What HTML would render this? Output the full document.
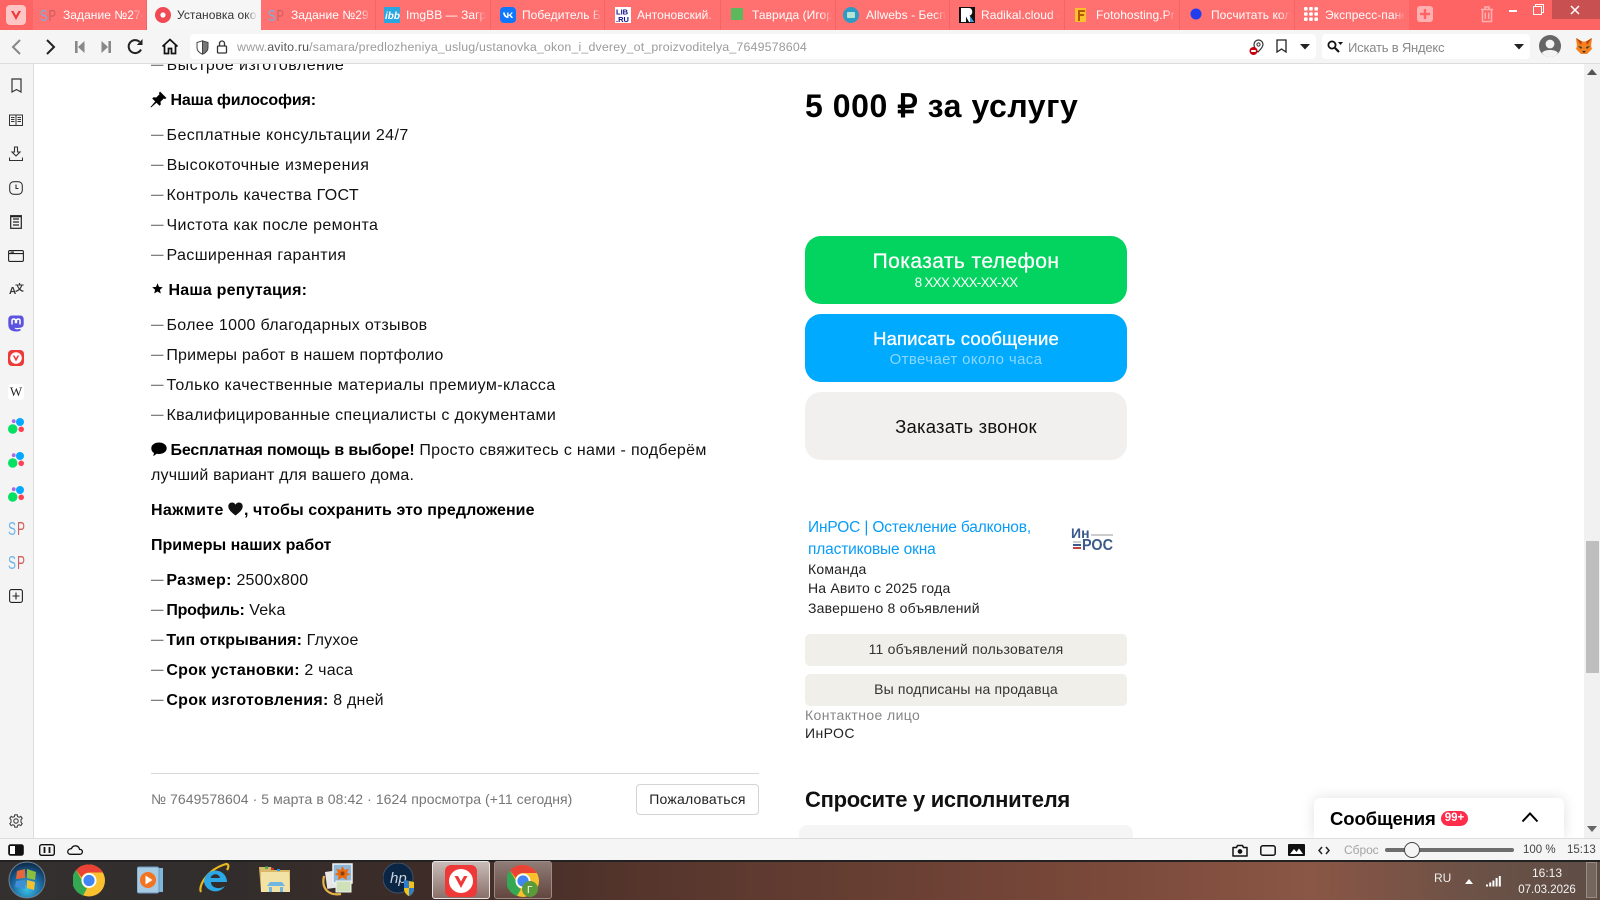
<!DOCTYPE html>
<html lang="ru"><head><meta charset="utf-8"><title>Авито</title>
<style>
html,body{margin:0;padding:0;background:#fff}
#r{position:relative;width:1600px;height:900px;overflow:hidden;background:#fff;font-family:"Liberation Sans","Noto Sans CJK SC",sans-serif;color:#111}
#r div,#r span.a,#r svg{position:absolute}
.t{white-space:nowrap}
.tab{top:0;height:30px;width:114px;background:#ff7070;border-right:1px solid #f46464;box-sizing:border-box}
.tab .n{position:absolute;left:30px;top:7px;width:80px;overflow:hidden;white-space:nowrap;color:#fff;font-size:12px;line-height:17px;-webkit-mask-image:linear-gradient(90deg,#000 86%,transparent 100%);mask-image:linear-gradient(90deg,#000 86%,transparent 100%);letter-spacing:.05px}
.tab svg{left:7px;top:7px}
.p{left:151px;font-size:16px;line-height:24px;white-space:nowrap;letter-spacing:.34px;color:#111}
.p b{letter-spacing:.1px;color:#000}
.p i{font-style:normal;font-weight:bold;color:#808080;display:inline-block;width:10.7px;font-size:12.5px;letter-spacing:0;position:relative;top:-1.5px}
.s{position:absolute;left:805px;white-space:nowrap;font-size:14px;line-height:20px;color:#222;letter-spacing:.2px}
.btn{left:805px;width:322px;border-radius:16px;text-align:center}
.c{position:absolute;left:0;right:0;white-space:nowrap;text-align:center}
</style></head><body><div id="r">

<!-- tab strip -->
<div style="left:0;top:0;width:1600px;height:30px;background:#ff6464"></div>
<div style="left:6px;top:5px;width:20px;height:20px;border-radius:4px;background:#ffc4c4"></div>
<svg style="left:6px;top:5px" width="20" height="20" viewBox="0 0 20 20"><path d="M5 6 L10 15 L15 6 L12.5 6 L10 10.5 L7.5 6Z" fill="#ef3939"/></svg>

<div class="tab" style="left:33px"><svg width="17" height="16" viewBox="0 0 17 16"><text x="0" y="14" font-size="16" font-family="Liberation Sans" fill="#6fb5e8" textLength="7.5" lengthAdjust="spacingAndGlyphs">S</text><text x="8.5" y="14" font-size="16" font-family="Liberation Sans" fill="#c86060" textLength="7.5" lengthAdjust="spacingAndGlyphs">P</text></svg><div class="n">Задание №274</div></div>
<div class="tab" style="left:147px;background:#f6f6f6;border:0"><svg width="18" height="18" viewBox="0 0 18 18" style="left:7px;top:6px"><circle cx="9" cy="9" r="8" fill="#f24a55"/><circle cx="9" cy="9" r="2.6" fill="#fff"/></svg><div class="n" style="color:#333;left:30px">Установка окон</div></div>
<div class="tab" style="left:261px;width:115px"><svg width="17" height="16" viewBox="0 0 17 16"><text x="0" y="14" font-size="16" font-family="Liberation Sans" fill="#6fb5e8" textLength="7.5" lengthAdjust="spacingAndGlyphs">S</text><text x="8.5" y="14" font-size="16" font-family="Liberation Sans" fill="#c86060" textLength="7.5" lengthAdjust="spacingAndGlyphs">P</text></svg><div class="n" style="left:30px">Задание №291</div></div>
<div class="tab" style="left:376px;width:115px"><svg width="16" height="16" viewBox="0 0 16 16" style="left:8px"><rect width="16" height="16" fill="#2aa6e0"/><text x="1" y="12" font-size="10" font-weight="bold" font-style="italic" font-family="Liberation Sans" fill="#fff">ibb</text></svg><div class="n" style="left:30px">ImgBB — Загру</div></div>
<div class="tab" style="left:491px"><svg width="16" height="16" viewBox="0 0 16 16" style="left:9px"><rect width="16" height="16" rx="4" fill="#0d77ff"/><path d="M3 5.5 C3.5 9 5 11 8.5 11 V8.5 C10 8.8 10.7 10 11.3 11 H13 C12.5 9.6 11.4 8.4 10.6 8 C11.4 7.4 12.3 6.5 12.7 5.5 H11.2 C10.8 6.5 9.8 7.6 8.5 7.9 V5.5 H7.2 V9.4 C6 9 5.2 7.6 4.8 5.5Z" fill="#fff"/></svg><div class="n" style="left:31px">Победитель Би</div></div>
<div class="tab" style="left:605px;width:116px"><svg width="16" height="16" viewBox="0 0 16 16" style="left:10px;top:7px"><rect width="16" height="16" fill="#fff"/><text x="1" y="7.5" font-size="7.5" font-weight="bold" font-family="Liberation Sans" fill="#11118a">LIB</text><text x="1" y="15" font-size="7.5" font-weight="bold" font-family="Liberation Sans" fill="#11118a">.RU</text></svg><div class="n" style="left:32px">Антоновский. Э</div></div>
<div class="tab" style="left:721px;width:115px"><div style="left:10px;top:8px;width:12px;height:12px;background:#5cb85c"></div><div class="n" style="left:31px">Таврида (Игор</div></div>
<div class="tab" style="left:836px;width:114px"><svg width="16" height="16" viewBox="0 0 16 16" style="left:7px"><circle cx="8" cy="8" r="8" fill="#2e9bc4"/><rect x="4" y="5" width="8" height="6" rx="1" fill="#b5e3d4"/></svg><div class="n" style="left:30px">Allwebs - Бесп</div></div>
<div class="tab" style="left:950px;width:115px"><svg width="16" height="16" viewBox="0 0 16 16" style="left:9px"><rect width="16" height="16" fill="#111"/><path d="M2 1 H10 C14 1 14.5 8 10.5 8.6 L15 15 H10 L7 9.5 V15 H2Z" fill="#fff"/><path d="M11 9 L15 15 H11Z" fill="#3aa0e6"/></svg><div class="n" style="left:31px">Radikal.cloud -</div></div>
<div class="tab" style="left:1065px;width:115px"><svg width="16" height="16" viewBox="0 0 16 16" style="left:8px"><rect x="2" y="1" width="11" height="14" fill="#fbc02d"/><path d="M5 3 H12 V5 H7 V7 H11 V9 H7 V14 H5Z" fill="#b35a00"/></svg><div class="n" style="left:31px">Fotohosting.Pro</div></div>
<div class="tab" style="left:1180px;width:115px"><svg width="12" height="12" viewBox="0 0 12 12" style="left:10px;top:8px"><circle cx="6" cy="6" r="5.5" fill="#1f3df0"/></svg><div class="n" style="left:31px">Посчитать кол</div></div>
<div class="tab" style="left:1295px;width:114px;border:0"><svg width="14" height="14" viewBox="0 0 14 14" style="left:9px;top:7px" fill="#fff"><rect x="0" y="0" width="3.6" height="3.6" rx="1"/><rect x="5.2" y="0" width="3.6" height="3.6" rx="1"/><rect x="10.4" y="0" width="3.6" height="3.6" rx="1"/><rect x="0" y="5.2" width="3.6" height="3.6" rx="1"/><rect x="5.2" y="5.2" width="3.6" height="3.6" rx="1"/><rect x="10.4" y="5.2" width="3.6" height="3.6" rx="1"/><rect x="0" y="10.4" width="3.6" height="3.6" rx="1"/><rect x="5.2" y="10.4" width="3.6" height="3.6" rx="1"/><rect x="10.4" y="10.4" width="3.6" height="3.6" rx="1"/></svg><div class="n" style="left:30px">Экспресс-пане</div></div>
<div style="left:1417px;top:6px;width:16px;height:16px;border-radius:3px;background:#ffb1b1"></div>
<svg style="left:1417px;top:6px" width="16" height="16" viewBox="0 0 16 16"><path d="M8 3V13M3 8H13" stroke="#ff6464" stroke-width="2.4"/></svg>
<svg style="left:1480px;top:5px" width="14" height="18" viewBox="0 0 14 18" fill="none" stroke="#ffb1b1" stroke-width="1.5"><path d="M1 4.5H13M5 4V2H9V4M2.5 5V16.5H11.5V5M5.3 7.5V14M8.7 7.5V14"/></svg>
<div style="left:1509px;top:10px;width:8px;height:2px;background:#fff"></div>
<svg style="left:1533px;top:4px" width="11" height="11" viewBox="0 0 11 11" fill="none" stroke="#fff" stroke-width="1"><rect x=".5" y="2.5" width="8" height="8"/><path d="M2.5 2.5V.5H10.5V8.5H8.5"/></svg>
<div style="left:1552px;top:0;width:48px;height:19px;background:#c85050"></div>
<svg style="left:1570px;top:5px" width="10" height="10" viewBox="0 0 10 10"><path d="M1 1L9 9M9 1L1 9" stroke="#fff" stroke-width="1.5"/></svg>

<!-- toolbar -->
<div style="left:0;top:30px;width:1600px;height:33px;background:#f5f5f5"></div>
<div style="left:0;top:63px;width:1600px;height:1px;background:#ddd"></div>
<div style="left:190px;top:34px;width:1126px;height:25px;background:#fff;border-radius:4px"></div>
<div style="left:1322px;top:34px;width:208px;height:25px;background:#fff;border-radius:4px"></div>
<svg style="left:10px;top:38px" width="12" height="18" viewBox="0 0 12 18" fill="none" stroke="#888" stroke-width="2"><path d="M10 2L3 9L10 16"/></svg>
<svg style="left:45px;top:38px" width="12" height="18" viewBox="0 0 12 18" fill="none" stroke="#222" stroke-width="2"><path d="M2 2L9 9L2 16"/></svg>
<svg style="left:75px;top:40px" width="10" height="14" viewBox="0 0 10 14" fill="#888"><path d="M0 1H2.6V13H0ZM9.5 1V13L3 7Z"/></svg>
<svg style="left:101px;top:40px" width="10" height="14" viewBox="0 0 10 14" fill="#888"><path d="M7.4 1H10V13H7.4ZM0.5 1V13L7 7Z"/></svg>
<svg style="left:127px;top:38px" width="17" height="17" viewBox="0 0 17 17" fill="none"><path d="M14 11.5A6.5 6.5 0 1 1 12.6 3.8" stroke="#222" stroke-width="2"/><path d="M15.5 1V7H9.8Z" fill="#222"/></svg>
<svg style="left:161px;top:38px" width="18" height="17" viewBox="0 0 18 17" fill="none" stroke="#111" stroke-width="1.7"><path d="M1.5 8.5L9 1.5L16.5 8.5M3.5 7V15.5H7.5V10.5H10.5V15.5H14.5V7"/></svg>
<svg style="left:196px;top:40px" width="13" height="15" viewBox="0 0 13 15"><path d="M6.5 .8L12 2.5V7.5C12 11 9.5 13 6.5 14.2Z" fill="#777"/><path d="M6.5 .8L1 2.5V7.5C1 11 3.5 13 6.5 14.2Z" fill="#fff" stroke="#444"/><path d="M6.5 .8L12 2.5V7.5C12 11 9.5 13 6.5 14.2" fill="none" stroke="#444"/></svg>
<svg style="left:216px;top:40px" width="12" height="14" viewBox="0 0 12 14" fill="none" stroke="#333" stroke-width="1.3"><rect x="1.5" y="6" width="9" height="7" rx="1"/><path d="M3.5 6V3.5A2.5 2.5 0 0 1 8.5 3.5V6"/></svg>
<div class="t" style="left:237px;top:39px;font-size:12.4px;line-height:17px;color:#9b9b9b;letter-spacing:.16px">www.<span style="color:#555">avito.ru</span>/samara/predlozheniya_uslug/ustanovka_okon_i_dverey_ot_proizvoditelya_7649578604</div>
<svg style="left:1249px;top:39px" width="16" height="17" viewBox="0 0 16 17"><path d="M9.5 1A4.5 4.5 0 0 1 14 5.5C14 8 11 11 9 13C7 11 5 8 5 5.5A4.5 4.5 0 0 1 9.5 1Z" fill="#fff" stroke="#333" stroke-width="1.2"/><circle cx="9.5" cy="5.5" r="1.6" fill="none" stroke="#333"/><circle cx="4.5" cy="12" r="4" fill="#c8000f"/><rect x="2.2" y="11" width="4.6" height="2" fill="#fff"/></svg>
<svg style="left:1276px;top:39px" width="11" height="14" viewBox="0 0 11 14" fill="none" stroke="#222" stroke-width="1.3"><path d="M1 1H10V13L5.5 10L1 13Z"/></svg>
<svg style="left:1300px;top:44px" width="10" height="6" viewBox="0 0 10 6" fill="#222"><path d="M0 0H10L5 5.5Z"/></svg>
<svg style="left:1327px;top:40px" width="17" height="13" viewBox="0 0 17 13" fill="none"><circle cx="5" cy="5" r="3.6" stroke="#111" stroke-width="1.8"/><path d="M8 8L12 12" stroke="#111" stroke-width="2.2"/><path d="M11 2H16L13.5 5Z" fill="#111"/></svg>
<div class="t" style="left:1348px;top:39px;font-size:13px;line-height:17px;color:#888;letter-spacing:-.2px">Искать в Яндекс</div>
<svg style="left:1514px;top:44px" width="10" height="6" viewBox="0 0 10 6" fill="#222"><path d="M0 0H10L5 5.5Z"/></svg>
<svg style="left:1539px;top:35px" width="22" height="23" viewBox="0 0 22 23"><circle cx="11" cy="11" r="11" fill="#666"/><circle cx="11" cy="9" r="4.4" fill="#f3f3f3"/><path d="M3 18C5 14 17 14 19 18C17 21 14 22 11 22S5 21 3 18Z" fill="#f3f3f3"/></svg>
<svg style="left:1575px;top:37px" width="18" height="18" viewBox="0 0 18 18"><path d="M1 1L7 4.5H11L17 1L16 9L17 12L12 17H6L1 12L2 9Z" fill="#f5801f"/><path d="M3 9L7 10L6 12ZM15 9L11 10L12 12Z" fill="#333"/><path d="M7 14H11L9 16Z" fill="#333"/><path d="M1 1L7 4.5L6 8ZM17 1L11 4.5L12 8Z" fill="#c2410c"/></svg>

<!-- sidebar -->
<div style="left:0;top:64px;width:33px;height:774px;background:#f4f4f4;border-right:1px solid #ddd"></div>
<svg style="left:11px;top:78px" width="11" height="15" viewBox="0 0 11 15" fill="none" stroke="#333" stroke-width="1.2"><path d="M1 1H10V14L5.5 11.5L1 14Z"/></svg>
<svg style="left:9px;top:114px" width="14" height="13" viewBox="0 0 14 13" fill="none" stroke="#333" stroke-width="1"><path d="M.5 1H7V11.5H.5ZM7 1H13.5V11.5H7ZM2 3.5H5.5M2 5.5H5.5M2 7.5H5.5M8.5 3.5H12M8.5 5.5H12M8.5 7.5H12"/></svg>
<svg style="left:9px;top:146px" width="14" height="16" viewBox="0 0 14 16" fill="none" stroke="#333" stroke-width="1.1"><path d="M5.5 1H8.5V6H11L7 10L3 6H5.5ZM.5 11.5V14.5H13.5V11.5"/></svg>
<svg style="left:9px;top:181px" width="14" height="14" viewBox="0 0 14 14" fill="none" stroke="#333" stroke-width="1.1"><rect x=".7" y=".7" width="12.6" height="12.6" rx="4"/><path d="M7 3.5V7.5H9.5"/></svg>
<svg style="left:10px;top:215px" width="12" height="14" viewBox="0 0 12 14" fill="none" stroke="#222" stroke-width="1.2"><rect x=".7" y=".7" width="10.6" height="12.6"/><path d="M3 4H9M3 7H9M3 10H9"/><path d="M.7 1.5H11.3" stroke-width="1.6"/></svg>
<svg style="left:8px;top:250px" width="16" height="12" viewBox="0 0 16 12" fill="none" stroke="#222" stroke-width="1.1"><rect x=".6" y=".6" width="14.8" height="10.8" rx="1.3"/><path d="M.6 3.6H15.4M2.5 2.2H6"/></svg>
<div class="t" style="left:9px;top:286px;font-size:10px;line-height:12px;font-weight:bold;color:#333">A</div>
<div class="t" style="left:15px;top:283px;font-size:9px;line-height:10px;font-weight:bold;color:#333">文</div>
<svg style="left:8px;top:315px" width="16" height="17" viewBox="0 0 16 17"><path d="M4 .5H12C14.5.5 15.7 2 15.7 4.5V9C15.7 11.5 14 12.5 12 12.7C9.5 13 8 13 6.5 12.8C6.7 14 8 14.5 10 14.3L12.5 13.9V15.6C10 16.8 6 16.8 3.5 15.5C1 14.2.3 12 .3 9V4.5C.3 2 1.8.5 4 .5Z" fill="#5b52e0"/><path d="M4 9.5V5.5C4 3.5 7.5 3.5 7.5 5.5V7.5H8.5V5.5C8.5 3.5 12 3.5 12 5.5V9.5" stroke="#fff" stroke-width="1.5" fill="none"/></svg>
<svg style="left:8px;top:350px" width="16" height="16" viewBox="0 0 16 16"><rect width="16" height="16" rx="4" fill="#ef3939"/><circle cx="8" cy="8" r="5.8" fill="#fff"/><path d="M4.8 5.5L8 11.5L11.2 5.5H9.5L8 8.3L6.5 5.5Z" fill="#ef3939"/></svg>
<div style="left:8px;top:384px;width:16px;height:16px;background:#fff;border-radius:3px"></div>
<div class="t" style="left:8px;top:384px;width:16px;text-align:center;font:13px/16px 'Liberation Serif',serif;color:#222">W</div>
<svg style="left:8px;top:418px" width="16" height="16" viewBox="0 0 16 16"><circle cx="4.7" cy="11" r="4.7" fill="#04e061"/><circle cx="12" cy="4" r="4" fill="#04a9ff"/><circle cx="13.2" cy="11.3" r="2.8" fill="#ff4053"/><circle cx="5.7" cy="3.2" r="1.9" fill="#a968f2"/></svg>
<svg style="left:8px;top:452px" width="16" height="16" viewBox="0 0 16 16"><circle cx="4.7" cy="11" r="4.7" fill="#04e061"/><circle cx="12" cy="4" r="4" fill="#04a9ff"/><circle cx="13.2" cy="11.3" r="2.8" fill="#ff4053"/><circle cx="5.7" cy="3.2" r="1.9" fill="#a968f2"/></svg>
<svg style="left:8px;top:486px" width="16" height="16" viewBox="0 0 16 16"><circle cx="4.7" cy="11" r="4.7" fill="#04e061"/><circle cx="12" cy="4" r="4" fill="#04a9ff"/><circle cx="13.2" cy="11.3" r="2.8" fill="#ff4053"/><circle cx="5.7" cy="3.2" r="1.9" fill="#a968f2"/></svg>
<svg style="left:8px;top:520px" width="17" height="17" viewBox="0 0 17 17"><text x="0" y="15" font-size="18" font-family="Liberation Sans" fill="#6fb5e8" textLength="8" lengthAdjust="spacingAndGlyphs">S</text><text x="9" y="15" font-size="18" font-family="Liberation Sans" fill="#d05f5f" textLength="8" lengthAdjust="spacingAndGlyphs">P</text></svg>
<svg style="left:8px;top:554px" width="17" height="17" viewBox="0 0 17 17"><text x="0" y="15" font-size="18" font-family="Liberation Sans" fill="#6fb5e8" textLength="8" lengthAdjust="spacingAndGlyphs">S</text><text x="9" y="15" font-size="18" font-family="Liberation Sans" fill="#d05f5f" textLength="8" lengthAdjust="spacingAndGlyphs">P</text></svg>
<svg style="left:9px;top:589px" width="14" height="14" viewBox="0 0 14 14" fill="none" stroke="#222" stroke-width="1.1"><rect x=".6" y=".6" width="12.8" height="12.8" rx="2"/><path d="M7 3.5V10.5M3.5 7H10.5"/></svg>
<svg style="left:9px;top:814px" width="14" height="14" viewBox="0 0 14 14" fill="none" stroke="#444" stroke-width="1.1"><circle cx="7" cy="7" r="2.2"/><path d="M5.8 .8H8.2L8.6 2.6L10.2 3.3L11.8 2.4L13.2 4.3L12 5.7V8.3L13.2 9.7L11.8 11.6L10.2 10.7L8.6 11.4L8.2 13.2H5.8L5.4 11.4L3.8 10.7L2.2 11.6L.8 9.7L2 8.3V5.7L.8 4.3L2.2 2.4L3.8 3.3L5.4 2.6Z"/></svg>

<!-- article left column -->
<div style="left:34px;top:64px;width:1550px;height:774px;overflow:hidden;background:transparent">
 <div class="p" style="left:117px;top:-10px;letter-spacing:.49px"><i>—</i> Быстрое изготовление</div>
</div>
<svg style="left:150px;top:91px" width="17" height="17" viewBox="0 0 17 17" fill="#000"><path d="M10 .5L16.5 7L15 8L13.8 7.5L10.5 10.8L10.8 13.5L9.5 14.8L6.5 11.8L1 16.5L.5 16L5.2 10.5L2.2 7.5L3.5 6.2L6.2 6.5L9.5 3.2L9 2Z"/></svg>
<div class="p" style="left:170.5px;top:89px"><b style="letter-spacing:-.15px">Наша философия:</b></div>
<div class="p" style="top:124px;letter-spacing:.41px"><i>—</i> Бесплатные консультации 24/7</div>
<div class="p" style="top:154px;letter-spacing:.44px"><i>—</i> Высокоточные измерения</div>
<div class="p" style="top:184px"><i>—</i> Контроль качества ГОСТ</div>
<div class="p" style="top:214px;letter-spacing:.38px"><i>—</i> Чистота как после ремонта</div>
<div class="p" style="top:244px;letter-spacing:.38px"><i>—</i> Расширенная гарантия</div>
<svg style="left:152px;top:283px" width="11" height="11" viewBox="0 0 11 11" fill="#000"><path d="M5.5 .3L7 3.9L10.8 4.2L7.9 6.7L8.8 10.5L5.5 8.5L2.2 10.5L3.1 6.7L.2 4.2L4 3.9Z"/></svg>
<div class="p" style="left:168.5px;top:279px"><b style="letter-spacing:.2px">Наша репутация:</b></div>
<div class="p" style="top:314px;letter-spacing:.31px"><i>—</i> Более 1000 благодарных отзывов</div>
<div class="p" style="top:344px;letter-spacing:.18px"><i>—</i> Примеры работ в нашем портфолио</div>
<div class="p" style="top:374px;letter-spacing:.39px"><i>—</i> Только качественные материалы премиум-класса</div>
<div class="p" style="top:404px"><i>—</i> Квалифицированные специалисты с документами</div>
<svg style="left:151px;top:442px" width="16" height="15" viewBox="0 0 16 15" fill="#000"><path d="M8 .5C12.2.5 15.7 2.8 15.7 6.3S12.2 12 8 12C7.2 12 6.4 12 5.7 11.8L2.2 14.2L3 11C1.2 10 .3 8.3.3 6.3C.3 2.8 3.8.5 8 .5Z"/></svg>
<div class="p" style="left:170.5px;top:439px;letter-spacing:.31px"><b style="letter-spacing:-.14px">Бесплатная помощь в выборе!</b> Просто свяжитесь с нами - подберём</div>
<div class="p" style="top:464px;letter-spacing:.18px">лучший вариант для вашего дома.</div>
<div class="p" style="top:499px"><b style="letter-spacing:.36px">Нажмите </b></div>
<svg style="left:228px;top:502px" width="15" height="14" viewBox="0 0 15 14" fill="#111"><path d="M7.5 13.5C3 10 .3 7.5.3 4.3C.3 2 2 .5 4 .5C5.5.5 6.8 1.3 7.5 2.6C8.2 1.3 9.5.5 11 .5C13 .5 14.7 2 14.7 4.3C14.7 7.5 12 10 7.5 13.5Z"/></svg>
<div class="p" style="left:244px;top:499px"><b style="letter-spacing:.08px">, чтобы сохранить это предложение</b></div>
<div class="p" style="top:534px"><b style="letter-spacing:-.01px">Примеры наших работ</b></div>
<div class="p" style="top:569px;letter-spacing:.2px"><i>—</i> <b style="letter-spacing:.36px">Размер:</b> 2500x800</div>
<div class="p" style="top:599px;letter-spacing:.2px"><i>—</i> <b style="letter-spacing:-.25px">Профиль:</b> Veka</div>
<div class="p" style="top:629px;letter-spacing:.2px"><i>—</i> <b style="letter-spacing:.08px">Тип открывания:</b> Глухое</div>
<div class="p" style="top:659px;letter-spacing:.2px"><i>—</i> <b style="letter-spacing:.22px">Срок установки:</b> 2 часа</div>
<div class="p" style="top:689px;letter-spacing:.2px"><i>—</i> <b style="letter-spacing:.28px">Срок изготовления:</b> 8 дней</div>
<div style="left:151px;top:773px;width:608px;height:1px;background:#d9d9d9"></div>
<div class="t" style="left:151px;top:789px;font-size:14px;line-height:20px;color:#767676;letter-spacing:.07px">№ 7649578604 · 5 марта в 08:42 · 1624 просмотра (+11 сегодня)</div>
<div style="left:636px;top:784px;width:121px;height:29px;border:1px solid #d4d4d4;border-radius:4px"><span class="c" style="font-size:14px;line-height:28px;color:#222;letter-spacing:.2px">Пожаловаться</span></div>

<!-- right column -->
<div class="t" style="left:805px;top:86px;font-size:32px;line-height:40px;font-weight:bold;color:#000;letter-spacing:.55px">5 000 ₽ за услугу</div>
<div class="btn" style="top:236px;height:68px;background:#03d35f"><span class="c" style="top:13px;font-size:21px;line-height:26px;color:#fff;letter-spacing:.42px;-webkit-text-stroke:.25px #fff">Показать телефон</span><span class="c" style="top:38px;font-size:13.5px;line-height:18px;color:#fff;letter-spacing:-.75px">8 XXX XXX-XX-XX</span></div>
<div class="btn" style="top:314px;height:68px;background:#00aaff"><span class="c" style="top:13px;font-size:18.5px;line-height:24px;color:#fff;letter-spacing:.15px;-webkit-text-stroke:.35px #fff">Написать сообщение</span><span class="c" style="top:37px;font-size:15px;line-height:18px;color:#8ad8ff;letter-spacing:.37px">Отвечает около часа</span></div>
<div class="btn" style="top:392px;height:68px;background:#f1f0ee"><span class="c" style="top:23px;font-size:18.5px;line-height:24px;color:#111;letter-spacing:.2px">Заказать звонок</span></div>

<div class="s" style="left:808px;top:517px;font-size:15.5px;line-height:22px;color:#0a9cf5;letter-spacing:-.15px">ИнРОС | Остекление балконов,</div>
<div class="s" style="left:808px;top:539px;font-size:15.5px;line-height:22px;color:#0a9cf5;letter-spacing:-.15px">пластиковые окна</div>
<div class="s" style="left:808px;top:559px">Команда</div>
<div class="s" style="left:808px;top:578px">На Авито с 2025 года</div>
<div class="s" style="left:808px;top:598px">Завершено 8 объявлений</div>
<svg style="left:1070px;top:526px" width="46" height="27" viewBox="0 0 46 27"><text x="1" y="12" font-size="14" font-weight="bold" font-family="Liberation Sans" fill="#3b5a8c">Ин</text><text x="12" y="24" font-size="16" font-weight="bold" font-family="Liberation Sans" fill="#3b5a8c" textLength="31" lengthAdjust="spacingAndGlyphs">РОС</text><rect x="21" y="8" width="22" height="2" fill="#ccc"/><rect x="3" y="15" width="8" height="2" fill="#ccc"/><rect x="3" y="18" width="8" height="2" fill="#3b5a8c"/><rect x="3" y="21" width="8" height="2" fill="#c24040"/></svg>
<div class="btn" style="top:634px;height:32px;border-radius:5px;background:#f1efe9"><span class="c" style="top:-1px;font-size:14px;line-height:32px;color:#333;letter-spacing:.22px">11 объявлений пользователя</span></div>
<div class="btn" style="top:674px;height:32px;border-radius:5px;background:#f1efe9"><span class="c" style="top:-1px;font-size:14px;line-height:32px;color:#333;letter-spacing:.16px">Вы подписаны на продавца</span></div>
<div class="s" style="top:705px;color:#858585;letter-spacing:.4px">Контактное лицо</div>
<div class="s" style="top:723px;color:#222;letter-spacing:.4px">ИнРОС</div>
<div class="t" style="left:805px;top:785px;font-size:22px;line-height:30px;font-weight:bold;color:#111;letter-spacing:-.3px">Спросите у исполнителя</div>
<div style="left:799px;top:825px;width:334px;height:13px;background:#f5f5f5;border-radius:8px 8px 0 0"></div>

<!-- messages -->
<div style="left:1314px;top:798px;width:250px;height:40px;background:#fff;border-radius:6px 6px 0 0;box-shadow:0 0 14px rgba(0,0,0,.12)"></div>
<div class="t" style="left:1330px;top:806px;font-size:18.5px;line-height:26px;font-weight:bold;color:#000;letter-spacing:-.1px">Сообщения</div>
<div style="left:1441px;top:811px;width:27px;height:15px;border-radius:8px;background:#ff2d4b;color:#fff;font-size:11.5px;line-height:15px;font-weight:bold;text-align:center">99+</div>
<svg style="left:1521px;top:811px" width="18" height="12" viewBox="0 0 18 12" fill="none" stroke="#000" stroke-width="2"><path d="M1.5 10.5L9 2.5L16.5 10.5"/></svg>

<!-- scrollbar -->
<div style="left:1584px;top:64px;width:16px;height:774px;background:#f1f1f1"></div>
<div style="left:1586px;top:541px;width:13px;height:132px;background:#bebebe"></div>
<svg style="left:1587px;top:69px" width="10" height="6" viewBox="0 0 10 6" fill="#555"><path d="M0 6L5 0L10 6Z"/></svg>
<svg style="left:1587px;top:826px" width="10" height="6" viewBox="0 0 10 6" fill="#666"><path d="M0 0H10L5 6Z"/></svg>

<!-- status bar -->
<div style="left:0;top:838px;width:1600px;height:22px;background:#f5f5f5;border-top:1px solid #ddd;box-sizing:border-box"></div>
<svg style="left:8px;top:844px" width="16" height="12" viewBox="0 0 16 12"><rect x=".7" y=".7" width="14.6" height="10.6" rx="2" fill="#111" stroke="#111"/><rect x="2" y="2" width="5" height="8" fill="#fff"/></svg>
<svg style="left:39px;top:844px" width="16" height="12" viewBox="0 0 16 12" fill="none" stroke="#111" stroke-width="1.4"><rect x=".7" y=".7" width="14.6" height="10.6" rx="2"/><path d="M5.5 3V9M10.5 3V9" stroke-width="1.8"/></svg>
<svg style="left:67px;top:845px" width="16" height="10" viewBox="0 0 16 10" fill="none" stroke="#111" stroke-width="1.3"><path d="M3.5 9.3H12.5C14.5 9.3 15.4 8 15.4 6.7C15.4 5.2 14 4.2 12.6 4.4C12 2 10.2.8 8.4.8C6.4.8 5 2 4.5 3.6C2.5 3.6.7 5 .7 6.6C.7 8.2 2 9.3 3.5 9.3Z"/></svg>
<svg style="left:1232px;top:844px" width="16" height="13" viewBox="0 0 16 13" fill="none" stroke="#111" stroke-width="1.5"><path d="M1 3.5H4.5L5.5 1.5H10.5L11.5 3.5H15V12H1Z" stroke-linejoin="round"/><circle cx="8" cy="7.5" r="1.6" fill="#111"/></svg>
<svg style="left:1260px;top:845px" width="16" height="11" viewBox="0 0 16 11" fill="none" stroke="#111" stroke-width="1.5"><rect x=".8" y=".8" width="14.4" height="9.4" rx="2"/></svg>
<svg style="left:1288px;top:844px" width="17" height="12" viewBox="0 0 17 12"><rect width="17" height="12" rx="1" fill="#111"/><path d="M2 10L6 5L8.5 8L11 4.5L15 10Z" fill="#fff"/></svg>
<svg style="left:1318px;top:846px" width="12" height="9" viewBox="0 0 12 9" fill="none" stroke="#222" stroke-width="1.5"><path d="M4 1L1 4.5L4 8M8 1L11 4.5L8 8"/></svg>
<div class="t" style="left:1344px;top:842px;font-size:12px;line-height:16px;color:#a4a4a4;letter-spacing:-.05px">Сброс</div>
<div style="left:1385px;top:848px;width:129px;height:4px;border-radius:2px;background:#6e6e6e"></div>
<div style="left:1404px;top:842px;width:14px;height:14px;border:1.5px solid #444;border-radius:50%;background:#f5f5f5"></div>
<div class="t" style="left:1523px;top:842px;font-size:11.5px;line-height:16px;color:#444">100 %</div>
<div class="t" style="left:1567px;top:842px;font-size:11.5px;line-height:16px;color:#444">15:13</div>

<!-- taskbar -->
<div style="left:0;top:860px;width:1600px;height:40px;background:linear-gradient(90deg,#33302f 0,#322d2c 15%,#3f2c27 28%,#55352c 40%,#683f33 55%,#7c4a3b 70%,#8a5645 82%,#6c5247 92%,#5d4d45 100%);border-top:1px solid #888;box-sizing:border-box"></div>
<div style="left:0;top:860px;width:1600px;height:2px;background:#222"></div>
<svg style="left:8px;top:861px" width="38" height="38" viewBox="0 0 38 38"><defs><radialGradient id="o" cx=".5" cy=".75" r=".7"><stop offset="0" stop-color="#39c3e8"/><stop offset=".6" stop-color="#1c659c"/><stop offset="1" stop-color="#0f2f50"/></radialGradient></defs><circle cx="19" cy="19" r="18" fill="url(#o)" stroke="#6f8190"/><path d="M9 10L17 8V17L8 18Z" fill="#e8673a"/><path d="M19 8L28 11L27 19L19 17Z" fill="#8bbd3f"/><path d="M8 20L17 19V28L7 26Z" fill="#3f8fd4"/><path d="M19 19L27 21L26 29L19 27Z" fill="#f4c02f"/></svg>
<svg style="left:73px;top:864px" width="32" height="33" viewBox="0 0 32 32"><circle cx="16" cy="16" r="16" fill="#fbc02d"/><path d="M16 0A16 16 0 0 1 29.9 8H16A8 8 0 0 0 8.6 13L3 5.5A16 16 0 0 1 16 0Z" fill="#ea4335"/><path d="M3 5.5L8.8 15.5A8 8 0 0 0 14 24L10 31A16 16 0 0 1 3 5.5Z" fill="#34a853"/><circle cx="16" cy="16" r="7.5" fill="#fff"/><circle cx="16" cy="16" r="5.6" fill="#4285f4"/></svg>
<svg style="left:137px;top:866px" width="26" height="28" viewBox="0 0 26 28"><rect x="16" y="2" width="10" height="24" fill="#7fb6dd"/><rect x="0" y="1" width="22" height="26" rx="2" fill="#a8cbe4" stroke="#6a9ac0"/><circle cx="11" cy="14" r="8" fill="#f37420"/><path d="M8.5 9.5V18.5L15.5 14Z" fill="#fff"/></svg>
<svg style="left:198px;top:862px" width="32" height="35" viewBox="0 0 32 35" fill="none"><path d="M3 30C0 25 8 8 28 2C31 2 31 5 29 8" stroke="#e9b71f" stroke-width="2.2"/><path d="M6 20A11.5 11.5 0 0 1 29 20H13C13 26 21 28 27 24A11.5 11.5 0 0 1 6 20ZM12.5 16H22C21 11 14 11 12.5 16Z" fill="#2ba8e5" fill-rule="evenodd"/></svg>
<svg style="left:258px;top:864px" width="33" height="30" viewBox="0 0 33 30"><path d="M1 3H13L15 6H32V28H3Z" fill="#d9b968"/><path d="M3 8H31L32 28H3Z" fill="#f3e2a5"/><rect x="7" y="2.5" width="3" height="2.5" fill="#4caf50"/><rect x="13" y="4" width="3" height="2" fill="#d32f2f"/><rect x="19" y="5" width="3" height="2" fill="#2196f3"/><path d="M9 22H27L24 18H12ZM11 23H14V28H11ZM22 23H25V28H22Z" fill="#6fb7e0"/></svg>
<svg style="left:321px;top:863px" width="32" height="33" viewBox="0 0 32 33"><path d="M3 13C0 26 8 33 20 31" stroke="#e6b54a" stroke-width="2.2" fill="none"/><rect x="5" y="8" width="14" height="17" fill="#e7e7e7" transform="rotate(-8 12 16)"/><rect x="12" y="1" width="19" height="19" fill="#8fb8d8" stroke="#f2f2f2" stroke-width="1.5"/><path d="M21.5 3L23.5 7L28 5.5L26 9.5L29.5 11.5L25.5 12.8L26 17L21.5 14.5L17 17L17.5 12.8L13.5 11.5L17 9.5L15 5.5L19.5 7Z" fill="#ea6a12"/><circle cx="21.5" cy="10.5" r="2" fill="#8a430c"/><rect x="15" y="18" width="15" height="11" fill="#cfe1b8" stroke="#f2f2f2"/></svg>
<svg style="left:383px;top:863px" width="32" height="34" viewBox="0 0 32 34"><circle cx="15" cy="15" r="15" fill="#0b2544" stroke="#3d5068"/><text x="7" y="20" font-size="15" font-style="italic" font-family="Liberation Sans" fill="#c9d3de">hp</text><path d="M21 17L31 19V26C31 30 27 33 26 33C25 33 21 30 21 26Z" fill="#f2c31d"/><path d="M21 17L26 18V25H21ZM26 25H31C31 30 27 33 26 33Z" fill="#2f7dd1"/></svg>
<div style="left:432px;top:861px;width:58px;height:38px;border:1px solid #e6e6e6;border-radius:3px;box-sizing:border-box;background:linear-gradient(180deg,#c9bcb8,#8a6f69)"></div>
<svg style="left:445px;top:865px" width="32" height="32" viewBox="0 0 32 32"><rect width="32" height="32" rx="6" fill="#ef3939"/><circle cx="16" cy="16" r="12" fill="#fff"/><path d="M9.5 11L16 23L22.5 11H19L16 16.5L13 11Z" fill="#ef3939"/></svg>
<div style="left:494px;top:861px;width:58px;height:38px;border:1px solid #9c8b85;border-radius:3px;box-sizing:border-box;background:linear-gradient(180deg,#8f7c76,#63463f)"></div>
<svg style="left:507px;top:865px" width="32" height="32" viewBox="0 0 32 32"><circle cx="16" cy="16" r="16" fill="#fbc02d"/><path d="M16 0A16 16 0 0 1 29.9 8H16A8 8 0 0 0 8.6 13L3 5.5A16 16 0 0 1 16 0Z" fill="#ea4335"/><path d="M3 5.5L8.8 15.5A8 8 0 0 0 14 24L10 31A16 16 0 0 1 3 5.5Z" fill="#34a853"/><circle cx="16" cy="16" r="7.5" fill="#fff"/><circle cx="16" cy="16" r="5.6" fill="#4285f4"/><circle cx="23" cy="24" r="8" fill="#5b9a38"/><text x="20" y="28" font-size="10" fill="#fff" font-family="Liberation Sans">Г</text></svg>
<div class="t" style="left:1434px;top:870px;font-size:12px;line-height:16px;color:#eee">RU</div>
<svg style="left:1465px;top:879px" width="8" height="5" viewBox="0 0 8 5" fill="#fff"><path d="M0 5L4 0L8 5Z"/></svg>
<svg style="left:1486px;top:875px" width="16" height="12" viewBox="0 0 16 12" fill="#fff"><rect x="0" y="9.5" width="2" height="2"/><rect x="3.2" y="7.5" width="2" height="4"/><rect x="6.4" y="5.5" width="2" height="6"/><rect x="9.6" y="3" width="2" height="8.5"/><rect x="12.8" y="1" width="2" height="10.5"/></svg>
<div class="t" style="left:1500px;top:865px;width:94px;text-align:center;font-size:12px;line-height:16px;color:#f4f4f4">16:13</div>
<div class="t" style="left:1500px;top:882px;width:94px;text-align:center;font-size:11.5px;line-height:16px;color:#f4f4f4">07.03.2026</div>
<div style="left:1586px;top:862px;width:11px;height:36px;border:1px solid #9a8a82;box-sizing:border-box;background:rgba(255,255,255,.14)"></div>

</div></body></html>
